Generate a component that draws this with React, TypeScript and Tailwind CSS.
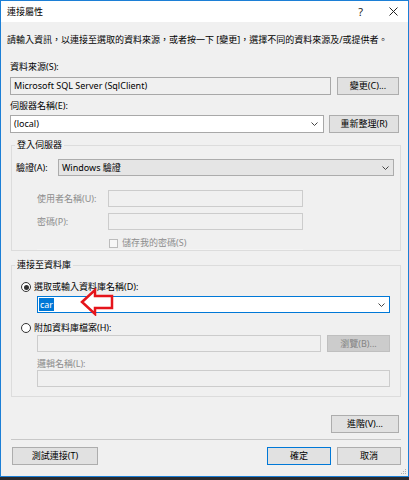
import type { ReactNode } from 'react';

const font = "font-['Noto_Sans','Noto_Sans_CJK_TC',sans-serif] text-[9px] leading-[12px]";

function Chevron() {
  return (
    <svg width="7" height="4" viewBox="0 0 7 4" className="shrink-0">
      <path d="M0.5 0.5 L3.5 3.5 L6.5 0.5" fill="none" stroke="#444" strokeWidth="1" />
    </svg>
  );
}

function Button({ children, className = '', disabled, primary }: { children: ReactNode; className?: string; disabled?: boolean; primary?: boolean }) {
  const tone = disabled
    ? 'bg-[#cccccc] border-[#bfbfbf] text-[#838383]'
    : primary
      ? 'bg-[#e1e1e1] border-[#0078d7] text-black'
      : 'bg-[#e1e1e1] border-[#adadad] text-black';
  return (
    <div className={`h-[18px] border flex items-center justify-center shrink-0 ${tone} ${className}`}>
      {children}
    </div>
  );
}

function Radio({ checked }: { checked?: boolean }) {
  return (
    <div className="w-[10px] h-[10px] rounded-full border border-[#333] bg-white flex items-center justify-center shrink-0">
      {checked && <div className="w-[5px] h-[5px] rounded-full bg-[#333]" />}
    </div>
  );
}

function GroupBox({ title, className = '', children }: { title: string; className?: string; children: ReactNode }) {
  return (
    <fieldset className={`ml-[10px] w-[390px] border border-[#dcdcdc] flex flex-col ${className}`}>
      <legend className="ml-[3px] px-[2px] leading-[12px]">{title}</legend>
      {children}
    </fieldset>
  );
}

export default function App() {
  return (
    <div className={`relative w-[409px] h-[480px] bg-[#2b2b2e] ${font} text-black`}>
      <div className="w-[409px] h-[477px] border border-[#1c7fd6] bg-[#f0f0f0] flex flex-col">
        {/* title bar */}
        <div className="h-[21px] bg-white flex items-center shrink-0">
          <span className="ml-[6px]">連接屬性</span>
          <span className="ml-auto mr-[26px] text-[11px] text-[#222]">?</span>
          <svg width="9" height="9" viewBox="0 0 9 9" className="mr-[10px]">
            <path d="M0.5 0.5 L8.5 8.5 M8.5 0.5 L0.5 8.5" stroke="#222" strokeWidth="1" />
          </svg>
        </div>

        <p className="mt-[12px] ml-[6px] whitespace-nowrap">
          請輸入資訊，以連接至選取的資料來源，或者按一下 [變更]，選擇不同的資料來源及/或提供者。
        </p>

        <div className="mt-[15px] ml-[9px]">資料來源(S):</div>
        <div className="mt-[4px] ml-[9px] flex gap-[6px]">
          <div className="w-[321px] h-[18px] border border-[#a8a8a8] bg-[#f0f0f0] flex items-center pl-[3px]">
            Microsoft SQL Server (SqlClient)
          </div>
          <Button className="w-[62px]">變更(C)...</Button>
        </div>

        <div className="mt-[5px] ml-[9px]">伺服器名稱(E):</div>
        <div className="mt-[3px] ml-[9px] flex gap-[5px]">
          <div className="w-[314px] h-[18px] border border-[#a8a8a8] bg-white flex items-center pl-[3px] pr-[5px]">
            <span>(local)</span>
            <span className="ml-auto"><Chevron /></span>
          </div>
          <Button className="w-[70px]">重新整理(R)</Button>
        </div>

        <GroupBox title="登入伺服器" className="mt-[6px] h-[112px] relative">
          <div className="mt-[8px] flex items-center">
            <span className="ml-[4px] w-[42px]">驗證(A):</span>
            <div className="w-[336px] h-[17px] border border-[#acacac] bg-[#e5e5e5] flex items-center pl-[3px] pr-[4px]">
              <span>Windows 驗證</span>
              <span className="ml-auto"><Chevron /></span>
            </div>
          </div>
          <div className="mt-[14px] flex items-center text-[#8d8d8d]">
            <span className="ml-[25px] w-[71px]">使用者名稱(U):</span>
            <div className="w-[195px] h-[17px] border border-[#cccccc] bg-[#f0f0f0]" />
          </div>
          <div className="mt-[6px] flex items-center text-[#8d8d8d]">
            <span className="ml-[25px] w-[71px]">密碼(P):</span>
            <div className="w-[195px] h-[17px] border border-[#cccccc] bg-[#f0f0f0]" />
          </div>
          <div className="mt-[7px] flex items-center text-[#8d8d8d]">
            <div className="ml-[97px] w-[9px] h-[9px] border border-[#bcbcbc] bg-[#f7f7f7]" />
            <span className="ml-[4px]">儲存我的密碼(S)</span>
          </div>
          <div className="absolute left-[25px] bottom-[-1px] w-[266px] h-[1px] bg-[#f4f4f4]" />
        </GroupBox>

        <GroupBox title="連接至資料庫" className="mt-[8px] h-[138px]">
          <div className="mt-[10px] ml-[9px] flex items-center gap-[3px]">
            <Radio checked />
            <span>選取或輸入資料庫名稱(D):</span>
          </div>
          <div className="mt-[3px] ml-[25px] w-[353px] h-[17px] border border-[#0078d7] bg-white flex items-center pl-[1px] pr-[4px]">
            <span className="bg-[#0078d7] text-white px-[1px] leading-[13px]">car</span>
            <span className="ml-auto"><Chevron /></span>
          </div>
          <div className="mt-[9px] ml-[9px] flex items-center gap-[3px]">
            <Radio />
            <span>附加資料庫檔案(H):</span>
          </div>
          <div className="mt-[1px] ml-[25px] flex gap-[6px]">
            <div className="w-[284px] h-[17px] border border-[#cccccc] bg-[#f0f0f0]" />
            <Button disabled className="w-[63px] !h-[17px]">瀏覽(B)...</Button>
          </div>
          <div className="mt-[6px] ml-[25px] text-[#8d8d8d]">邏輯名稱(L):</div>
          <div className="ml-[25px] w-[353px] h-[17px] border border-[#cccccc] bg-[#f0f0f0]" />
        </GroupBox>

        <Button className="mt-[18px] self-end mr-[9px] w-[68px]">進階(V)...</Button>

        <div className="mt-[6px] ml-[10px] w-[390px] h-[1px] bg-[#c8c8c8]" />

        <div className="mt-[7px] flex">
          <Button className="ml-[11px] w-[86px]">測試連接(T)</Button>
          <Button primary className="ml-auto w-[64px]">確定</Button>
          <Button className="ml-[6px] mr-[7px] w-[64px]">取消</Button>
        </div>
      </div>

      {/* size grip */}
      <svg width="6" height="6" viewBox="0 0 6 6" className="absolute left-[401px] top-[469px]">
        <rect x="4" y="0" width="1" height="1" fill="#b0b0b0" />
        <rect x="2" y="2" width="1" height="1" fill="#b0b0b0" />
        <rect x="4" y="2" width="1" height="1" fill="#b0b0b0" />
        <rect x="0" y="4" width="1" height="1" fill="#b0b0b0" />
        <rect x="2" y="4" width="1" height="1" fill="#b0b0b0" />
        <rect x="4" y="4" width="1" height="1" fill="#b0b0b0" />
      </svg>

      {/* red annotation arrow */}
      <svg width="34" height="28" viewBox="0 0 34 28" className="absolute left-[80px] top-[288px]">
        <path d="M2 14 L15 2 L15 8 L32 8 L32 20 L15 20 L15 26 Z" fill="white" stroke="#e5141b" strokeWidth="2.5" strokeLinejoin="miter" />
      </svg>
    </div>
  );
}
